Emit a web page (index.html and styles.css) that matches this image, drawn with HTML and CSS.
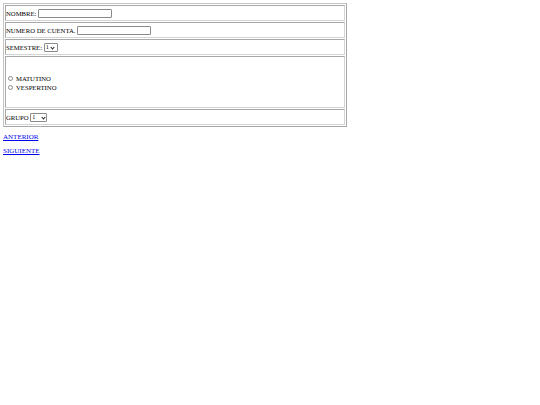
FILE: index.html
```html
<!DOCTYPE html>
<html>
<head>
<meta charset="utf-8">
<link rel="stylesheet" href="styles.css">
</head>
<body>
<form class="form">
<table class="grid">
<tr><td class="cell">NOMBRE: <input class="txt" type="text"></td></tr>
<tr><td class="cell">NUMERO DE CUENTA. <input class="txt" type="text"></td></tr>
<tr><td class="cell">SEMESTRE: <span class="sel sel-sm">1<span class="caret"></span></span></td></tr>
<tr><td class="cell tall">
<div class="opt"><span class="radio"></span>MATUTINO</div>
<div class="opt"><span class="radio"></span>VESPERTINO</div>
</td></tr>
<tr><td class="cell">GRUPO <span class="sel sel-md">1<span class="caret"></span></span></td></tr>
</table>
</form>
<p class="nav"><a href="#" class="link">ANTERIOR</a></p>
<p class="nav"><a href="#" class="link">SIGUIENTE</a></p>
</body>
</html>
```
FILE: styles.css
```css
html, body { background: #fff; }
body {
  margin: 3px;
  font-family: "Liberation Serif", "Times New Roman", serif;
  font-size: 6.7px;
  color: #000;
}
.form { margin: 0; }
.grid {
  width: 344px;
  border-collapse: separate;
  border-spacing: 1px;
  border: 1px solid #c4c4c4;
  border-right-color: #a8a8a8;
  border-bottom-color: #a8a8a8;
  padding: 0;
}
.cell {
  border: 1px solid #a8a8a8;
  border-right-color: #d4d4d4;
  border-bottom-color: #d4d4d4;
  height: 13px;
  padding: 1px 0 0 0;
  vertical-align: middle;
  line-height: 9px;
}
.tall { height: 48px; padding-top: 2px; }
.txt {
  width: 72px;
  height: 7px;
  border: 1px solid #8a8a8a;
  border-radius: 1px;
  padding: 0;
  margin: 0;
  vertical-align: middle;
  font-size: 6px;
}
.sel {
  display: inline-flex;
  align-items: center;
  height: 7px;
  border: 1px solid #8a8a8a;
  border-radius: 1px;
  vertical-align: middle;
  font-size: 6px;
  padding-left: 1px;
  gap: 1px;
  box-sizing: content-box;
}
.sel-sm { width: 11px; }
.sel-md { width: 14px; justify-content: space-between; }
.caret {
  width: 2px;
  height: 2px;
  border-right: 1px solid #222;
  border-bottom: 1px solid #222;
  transform: rotate(45deg);
  margin: -1px 1px 0 1px;
}
.opt {
  display: flex;
  align-items: center;
  height: 9px;
}
.radio {
  width: 3px;
  height: 3px;
  border: 1px solid #8a8a8a;
  border-radius: 50%;
  margin: 0 3px 0 2px;
}
.nav { margin: 7px 0 0 0; line-height: 7px; font-size: 7px; }
.link {
  color: #0000ee;
  text-decoration: underline;
  text-decoration-thickness: 1px;
  text-underline-offset: 1px;
}
```
